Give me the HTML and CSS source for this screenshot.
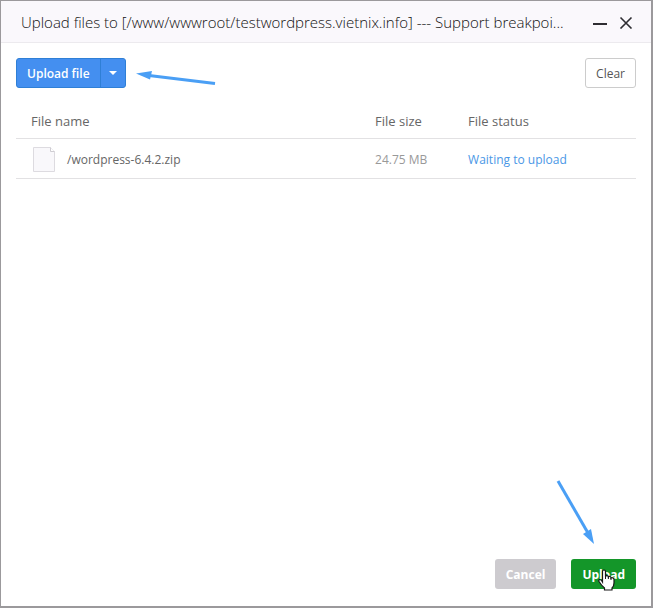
FILE: index.html
```html
<!DOCTYPE html>
<html lang="en">
<head>
    <meta charset="UTF-8">
    <meta name="viewport" content="width=device-width, initial-scale=1.0">
    <title>Upload files</title>
    <link rel="stylesheet" href="styles.css">
</head>
<body>
    <div class="dialog">
        <header class="titleBar">
            <h1 class="title">Upload files to [/www/wwwroot/testwordpress.vietnix.info] --- Support breakpoi...</h1>
            <button class="iconButton" type="button" aria-label="Minimize">
                <svg width="14" height="14" viewBox="0 0 14 14"><path d="M0 9H14" stroke="#2e2d32" stroke-width="2"/></svg>
            </button>
            <button class="iconButton" type="button" aria-label="Close">
                <svg width="14" height="14" viewBox="0 0 14 14"><path d="M1.5 2.5L12.5 13.5M12.5 2.5L1.5 13.5" stroke="#2e2d32" stroke-width="1.6" fill="none"/></svg>
            </button>
        </header>

        <main class="content">
            <div class="toolbar">
                <div class="splitButton">
                    <button class="uploadFile" type="button">Upload file</button>
                    <button class="uploadMenu" type="button" aria-label="More upload options">
                        <svg width="8" height="4" viewBox="0 0 8 4"><path d="M0 0H8L4 4Z" fill="#fff"/></svg>
                    </button>
                </div>
                <svg class="arrowLeft" width="80" height="24" viewBox="0 0 80 24">
                    <path d="M13 14.5L79 22.5" stroke="#4a9ff5" stroke-width="3"/>
                    <path d="M0 12.5L16 10L14 18.5Z" fill="#4a9ff5"/>
                </svg>
                <button class="clearButton" type="button">Clear</button>
            </div>

            <table class="fileTable">
                <thead>
                    <tr>
                        <th class="nameColumn">File name</th>
                        <th class="sizeColumn">File size</th>
                        <th>File status</th>
                    </tr>
                </thead>
                <tbody>
                    <tr>
                        <td>
                            <div class="fileName">
                                <svg width="22" height="25" viewBox="0 0 22 25">
                                    <path d="M.5 .5H17.5L21.5 4.5V24.5H.5Z" fill="#f9f8fb" stroke="#dddbe0"/>
                                    <path d="M17.5 .5V4.5H21.5" fill="#fff" stroke="#cfcdd2"/>
                                </svg>
                                <span>/wordpress-6.4.2.zip</span>
                            </div>
                        </td>
                        <td class="fileSize">24.75 MB</td>
                        <td class="fileStatus">Waiting to upload</td>
                    </tr>
                </tbody>
            </table>
        </main>

        <footer class="actions">
            <button class="actionButton cancelButton" type="button">Cancel</button>
            <div class="uploadAction">
                <button class="actionButton uploadButton" type="button">Upload</button>
                <svg class="arrowDown" width="40" height="66" viewBox="0 0 40 66">
                    <path d="M2 2L32 54" stroke="#4a9ff5" stroke-width="3"/>
                    <path d="M38 65L27 55L35 50Z" fill="#4a9ff5"/>
                </svg>
                <svg class="pointer" width="17" height="22" viewBox="0 0 17 22">
                    <path d="M4.5 13V2.5Q4.5 1 6 1T7.5 2.5V7.5Q8 6.5 9 6.7Q10.3 6.8 10.4 8Q11 7.2 12 7.5Q13 7.8 13 9Q14 8.3 15 9Q16 9.5 16 10.5V14Q16 17 14 19V21H6.5V19Q3.5 16.5 1 12.5Q.5 11 1.5 10.5Q3 10.3 4.5 13Z" fill="#fff" stroke="#171717" stroke-width="1.2"/>
                    <path d="M7.5 7V10M10.4 8V10M13 9V11" stroke="#171717"/>
                </svg>
            </div>
        </footer>
    </div>
</body>
</html>
```

FILE: styles.css
```css
* {
    box-sizing: border-box;
}

body {
    margin: 0;
    background-color: #fff;
    color: #666;
    font-family: "Open Sans", "Noto Sans", sans-serif;
    font-size: 12px;
}

button {
    padding: 0;
    border: none;
    font: inherit;
    cursor: pointer;
}

svg {
    display: block;
}

.dialog {
    display: flex;
    flex-direction: column;
    min-height: 100vh;
    border: solid #9b999c;
    border-width: 1px 2px 2px 1px;
}

.titleBar {
    display: flex;
    align-items: center;
    gap: 12px;
    height: 42px;
    padding: 0 18px 0 20px;
    background-color: #faf8fc;
    border-bottom: 1px solid #eceaee;
}

.title {
    flex: 1;
    margin: 0;
    overflow: hidden;
    color: #111;
    font-size: 15px;
    font-weight: 300;
    line-height: 20px;
    white-space: nowrap;
}

.iconButton {
    background: none;
}

.content {
    flex: 1;
    padding: 15px;
}

.toolbar {
    display: flex;
    align-items: center;
    gap: 10px;
}

.splitButton {
    display: flex;
    height: 30px;
    border: 1px solid #2f7fd6;
    border-radius: 3px;
    background-color: #448ff0;
}

.uploadFile {
    padding: 0 10px;
    background: none;
    color: #fff;
    font-weight: 600;
}

.uploadMenu {
    display: flex;
    align-items: center;
    justify-content: center;
    width: 25px;
    border-left: 1px solid #2f7fd6;
    background: none;
}

.clearButton {
    height: 30px;
    margin-left: auto;
    padding: 0 10px;
    border: 1px solid #ccc;
    border-radius: 3px;
    background-color: #fff;
    color: #555;
}

.fileTable {
    width: 100%;
    margin-top: 15px;
    border-collapse: collapse;
    table-layout: fixed;
}

.fileTable th,
.fileTable td {
    height: 40px;
    padding: 2px 0 0 15px;
    border-bottom: 1px solid #e2e1e3;
    text-align: left;
}

.fileTable th {
    height: 35px;
    font-size: 13px;
    font-weight: 400;
}

.fileTable td {
    font-weight: 500;
}

.nameColumn {
    width: 55.5%;
}

.sizeColumn {
    width: 15%;
}

.fileName {
    display: flex;
    align-items: center;
    gap: 12px;
    padding-left: 2px;
}

.fileSize {
    color: #999;
}

.fileStatus {
    color: #4a97e6;
}

.actions {
    display: flex;
    justify-content: flex-end;
    gap: 15px;
    padding: 0 15px 17px;
}

.actionButton {
    height: 30px;
    padding: 0 11px;
    border-radius: 3px;
    color: #fff;
    font-weight: 700;
}

.cancelButton {
    background-color: #cdcbcf;
}

.uploadAction {
    position: relative;
}

.uploadButton {
    background-color: #149629;
}

.arrowDown {
    position: absolute;
    right: 40px;
    bottom: 44px;
}

.pointer {
    position: absolute;
    right: 21px;
    bottom: -2px;
}
```
